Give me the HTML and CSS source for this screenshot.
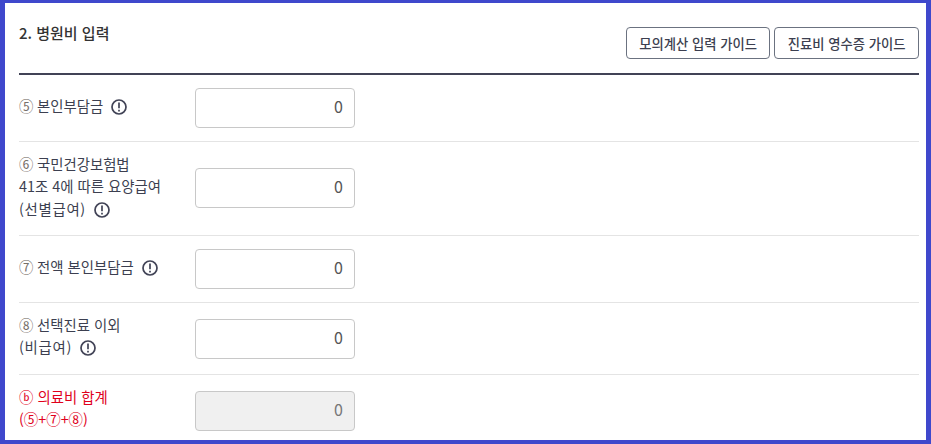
FILE: index.html
```html
<!DOCTYPE html>
<html lang="ko">
<head>
  <meta charset="UTF-8">
  <meta name="viewport" content="width=device-width, initial-scale=1.0">
  <title>병원비 입력</title>
  <link rel="stylesheet" href="styles.css">
</head>
<body>
  <div class="frame">
    <section class="panel">
      <div class="panel-head">
        <h2 class="panel-title">2. 병원비 입력</h2>
        <div class="guide-btns">
          <button class="guide-btn">모의계산 입력 가이드</button>
          <button class="guide-btn">진료비 영수증 가이드</button>
        </div>
      </div>

      <div class="row">
        <div class="row-label">
          <span class="num">⑤</span> 본인부담금
          <svg class="info-icon" viewBox="0 0 16 16"><circle cx="8" cy="8" r="7"/><path d="M8 3.6v5.6M8 10.8v1.6"/></svg>
        </div>
        <input class="amount" value="0">
      </div>

      <div class="row">
        <div class="row-label">
          <span class="num">⑥</span> 국민건강보험법<br>
          41조 4에 따른 요양급여<br>
          <span class="paren">(선별급여)</span>
          <svg class="info-icon" viewBox="0 0 16 16"><circle cx="8" cy="8" r="7"/><path d="M8 3.6v5.6M8 10.8v1.6"/></svg>
        </div>
        <input class="amount" value="0">
      </div>

      <div class="row">
        <div class="row-label">
          <span class="num">⑦</span> 전액 본인부담금
          <svg class="info-icon" viewBox="0 0 16 16"><circle cx="8" cy="8" r="7"/><path d="M8 3.6v5.6M8 10.8v1.6"/></svg>
        </div>
        <input class="amount" value="0">
      </div>

      <div class="row row-two">
        <div class="row-label">
          <span class="num">⑧</span> 선택진료 이외<br>
          <span class="paren">(비급여)</span>
          <svg class="info-icon" viewBox="0 0 16 16"><circle cx="8" cy="8" r="7"/><path d="M8 3.6v5.6M8 10.8v1.6"/></svg>
        </div>
        <input class="amount" value="0">
      </div>

      <div class="row row-two row-total">
        <div class="row-label">
          ⓑ 의료비 합계<br>
          (⑤+⑦+⑧)
        </div>
        <input class="amount" value="0" disabled>
      </div>
    </section>
  </div>
</body>
</html>
```

FILE: styles.css
```css
html, body {
  margin: 0;
  height: 100%;
  overflow: hidden;
}

body {
  font-family: "Noto Sans CJK KR", "Noto Sans", sans-serif;
  font-size: 14.4px;
  line-height: 22.4px;
  color: #3c3f50;
  background: #fff;
}

.frame {
  box-sizing: border-box;
  height: 444px;
  border-style: solid;
  border-color: #3f48cc;
  border-width: 3px 5px 4px 5px;
  overflow: hidden;
}

.panel {
  padding: 0 7px 0 14px;
}

.panel-head {
  box-sizing: border-box;
  height: 71.8px;
  display: flex;
  justify-content: space-between;
  border-bottom: 2px solid #414356;
}

.panel-title {
  margin: 18px 0 0;
  font-size: 15px;
  font-weight: 500;
  line-height: 24px;
  color: #333;
}

.guide-btns {
  display: flex;
  gap: 4px;
  margin-top: 24px;
}

.guide-btn {
  box-sizing: border-box;
  height: 32px;
  padding: 0 12.4px;
  font-family: inherit;
  font-size: 13.333px;
  font-weight: 500;
  color: #3c3f50;
  background: #fff;
  border: 1px solid #6b7280;
  border-radius: 4px;
}

.row {
  display: flex;
  align-items: center;
  padding: 13px 0;
  border-bottom: 1px solid #e4e4e4;
}

.row-label {
  width: 176px;
  flex: none;
  margin: -2px 0 2px;
}

.num {
  color: #77706a;
  margin-right: -0.5px;
}

.paren {
  letter-spacing: 0.7px;
}

.info-icon {
  width: 16px;
  height: 16px;
  margin-left: 4px;
  vertical-align: -3px;
  fill: none;
  stroke: #414356;
  stroke-width: 1.7;
}

.amount {
  box-sizing: border-box;
  width: 160px;
  height: 40px;
  padding: 0 11px 4px;
  font-family: inherit;
  font-size: 16px;
  text-align: right;
  color: #555;
  background: #fff;
  border: 1px solid #c8c8c8;
  border-radius: 4px;
}

.row-two .amount {
  margin: 1px 0 -1px;
}

.amount:disabled {
  color: #777;
  background: #f0f0f0;
}

.row-total .row-label {
  color: #e0001b;
}
```
